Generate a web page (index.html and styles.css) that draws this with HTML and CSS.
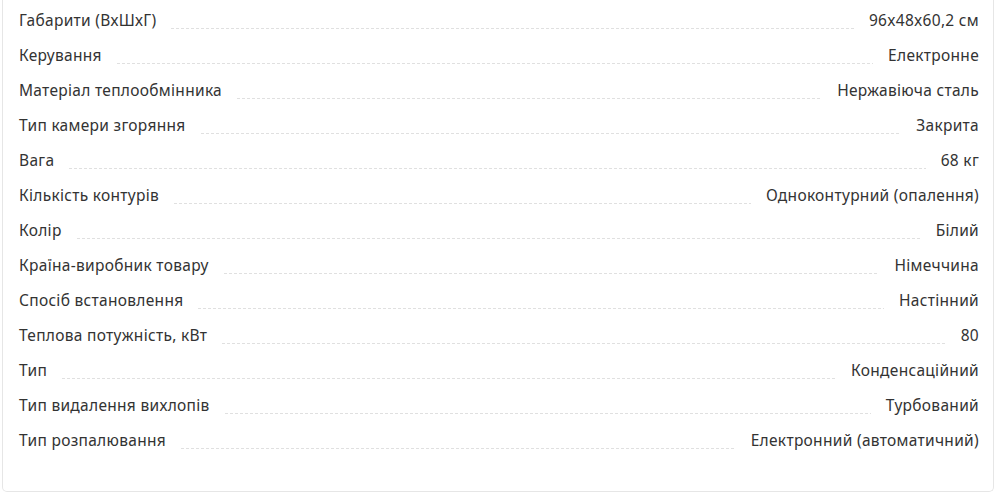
FILE: index.html
```html
<!DOCTYPE html>
<html lang="uk">
<head>
    <meta charset="UTF-8">
    <meta name="viewport" content="width=device-width, initial-scale=1.0">
    <title>Характеристики</title>
    <link rel="stylesheet" href="styles.css">
</head>
<body>

    <!-- Specs card -->
    <div class="specs">
        <div class="spec-row"><span class="spec-name">Габарити (ВхШхГ)</span><span class="spec-dots"></span><span class="spec-value">96x48x60,2 см</span></div>
        <div class="spec-row"><span class="spec-name">Керування</span><span class="spec-dots"></span><span class="spec-value">Електронне</span></div>
        <div class="spec-row"><span class="spec-name">Матеріал теплообмінника</span><span class="spec-dots"></span><span class="spec-value">Нержавіюча сталь</span></div>
        <div class="spec-row"><span class="spec-name">Тип камери згоряння</span><span class="spec-dots"></span><span class="spec-value">Закрита</span></div>
        <div class="spec-row"><span class="spec-name">Вага</span><span class="spec-dots"></span><span class="spec-value">68 кг</span></div>
        <div class="spec-row"><span class="spec-name">Кількість контурів</span><span class="spec-dots"></span><span class="spec-value">Одноконтурний (опалення)</span></div>
        <div class="spec-row"><span class="spec-name">Колір</span><span class="spec-dots"></span><span class="spec-value">Білий</span></div>
        <div class="spec-row"><span class="spec-name">Країна-виробник товару</span><span class="spec-dots"></span><span class="spec-value">Німеччина</span></div>
        <div class="spec-row"><span class="spec-name">Спосіб встановлення</span><span class="spec-dots"></span><span class="spec-value">Настінний</span></div>
        <div class="spec-row"><span class="spec-name">Теплова потужність, кВт</span><span class="spec-dots"></span><span class="spec-value">80</span></div>
        <div class="spec-row"><span class="spec-name">Тип</span><span class="spec-dots"></span><span class="spec-value">Конденсаційний</span></div>
        <div class="spec-row"><span class="spec-name">Тип видалення вихлопів</span><span class="spec-dots"></span><span class="spec-value">Турбований</span></div>
        <div class="spec-row"><span class="spec-name">Тип розпалювання</span><span class="spec-dots"></span><span class="spec-value">Електронний (автоматичний)</span></div>
    </div>

</body>
</html>
```

FILE: styles.css
```css
/* Page */
body {
    margin: 0;
    padding: 0 2px;
    background-color: #ffffff;
    font-family: "Noto Sans", Arial, sans-serif;
    color: #333333;
}

/* Card with the spec list */
.specs {
    border: 1px solid #e6e6e6;
    border-top: none;
    border-radius: 0 0 5px 5px;
    padding: 2px 14px 33px 16px;
    height: 456px;
    box-sizing: content-box;
}

/* One spec line */
.spec-row {
    display: flex;
    align-items: center;
    height: 35px;
    font-size: 15.5px;
    letter-spacing: 0.3px;
}

.spec-name,
.spec-value {
    white-space: nowrap;
}

/* Dashed leader between name and value */
.spec-dots {
    flex: 1;
    align-self: flex-end;
    margin: 0 15px 8px;
    height: 1px;
    background-image: linear-gradient(to right, #e0e0e0 3px, transparent 3px);
    background-size: 5px 1px;
    background-repeat: repeat-x;
}
```
